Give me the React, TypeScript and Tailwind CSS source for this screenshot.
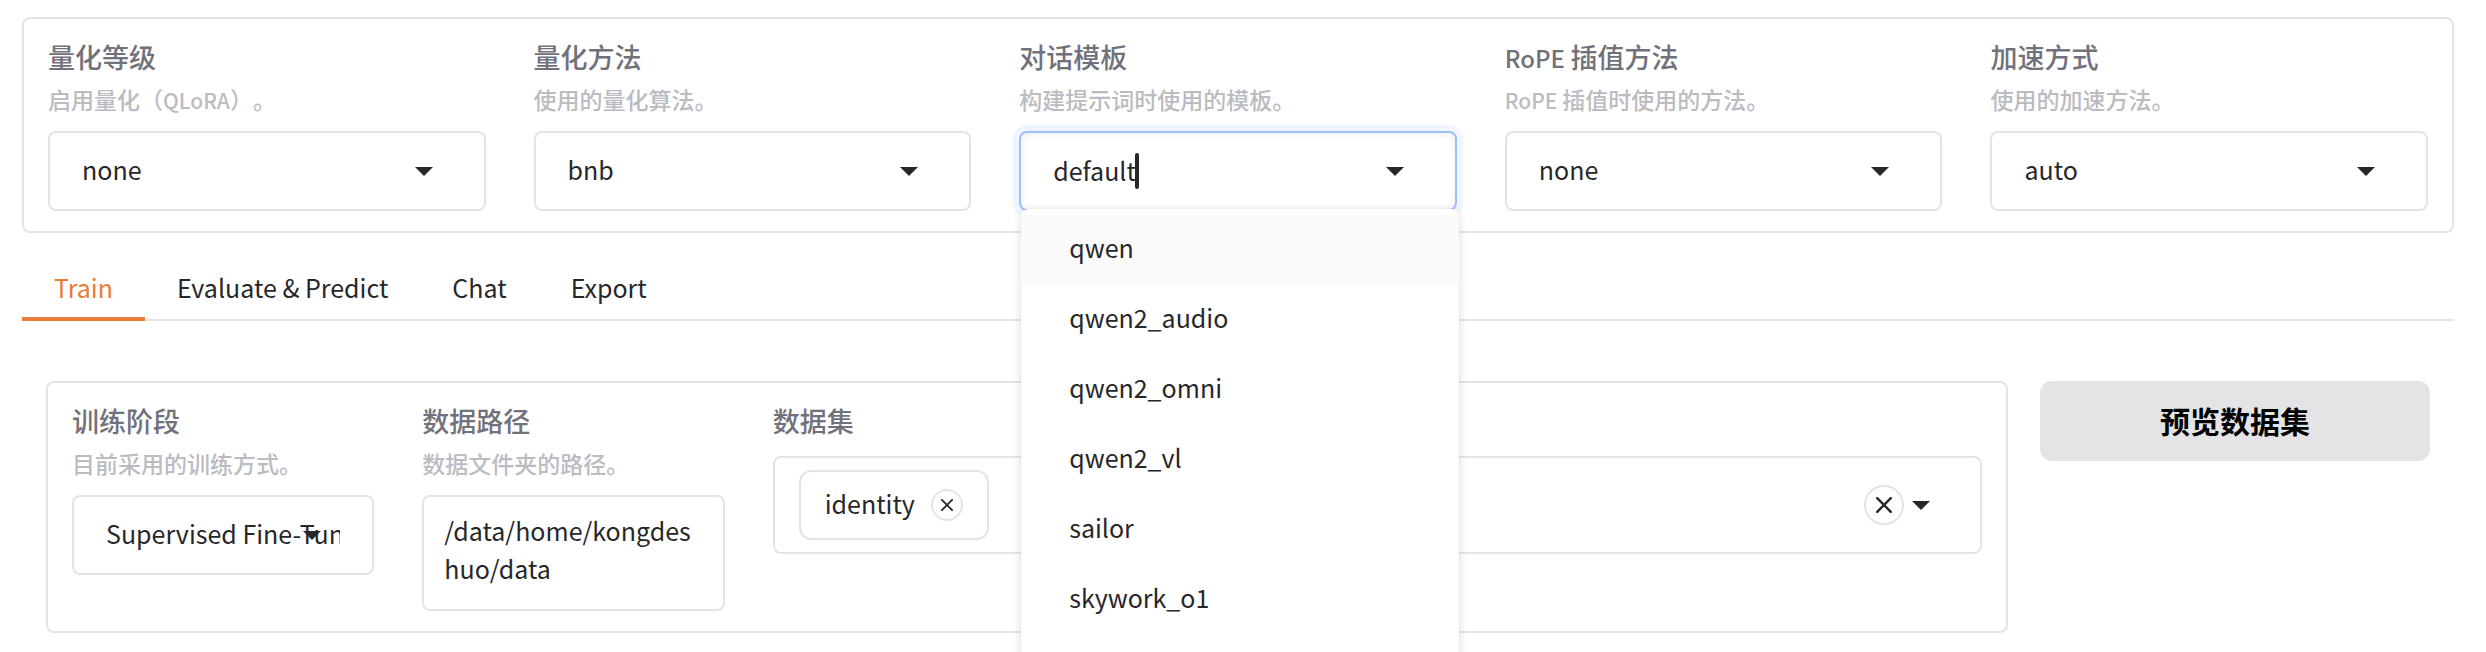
import { useId } from 'react';
import type { ReactNode } from 'react';

function Caret() {
  return (
    <svg viewBox="0 0 18 9" className="h-[9px] w-[18px] fill-zinc-800" aria-hidden="true">
      <path d="M0 0h18L9 9z" />
    </svg>
  );
}

function Cross({ className }: { className: string }) {
  return (
    <svg viewBox="0 0 16 16" className={className} fill="none" stroke="currentColor" strokeLinecap="round" aria-hidden="true">
      <path d="M1.2 1.2 14.8 14.8M14.8 1.2 1.2 14.8" />
    </svg>
  );
}

function Field({ id, label, info, children }: { id: string; label: ReactNode; info?: ReactNode; children: ReactNode }) {
  return (
    <div className="min-w-0">
      <label htmlFor={id} className="block text-[27px] leading-10 font-medium text-zinc-500">
        {label}
      </label>
      {info ? <p className="mt-1 mb-3.5 text-[23px] leading-9 font-medium text-[#bbbbc2]">{info}</p> : <div className="h-[15px]" />}
      {children}
    </div>
  );
}

function SelectField({ label, info, value }: { label: ReactNode; info: ReactNode; value: string }) {
  const id = useId();
  return (
    <Field id={id} label={label} info={info}>
      <div className="relative">
        <select id={id} className="block h-20 w-full appearance-none rounded-lg border-2 border-[#e4e4e5] bg-white px-8 pb-0.5 text-[25px] text-zinc-800">
          <option>{value}</option>
        </select>
        <span className="pointer-events-none absolute inset-y-0 right-[53px] flex items-center">
          <Caret />
        </span>
      </div>
    </Field>
  );
}

const templates = ['qwen', 'qwen2_audio', 'qwen2_omni', 'qwen2_vl', 'sailor', 'skywork_o1'];

function TemplateField() {
  return (
    <Field id="template" label="对话模板" info="构建提示词时使用的模板。">
      <div className="relative">
        <input
          id="template"
          type="text"
          role="combobox"
          aria-expanded="true"
          aria-controls="template-options"
          defaultValue="default"
          className="block h-20 w-full rounded-lg border-2 border-[#9cc0f9] bg-white px-8 pb-0.5 text-[25px] text-zinc-800 shadow-[0_0_0_6px_#eff6ff,inset_0_2px_8px_0_rgba(0,0,0,0.07)] outline-none"
        />
        <span className="pointer-events-none absolute top-[22px] left-[116px] h-9 w-1 rounded-sm bg-zinc-800" />
        <span className="pointer-events-none absolute inset-y-0 right-[53px] flex items-center">
          <Caret />
        </span>
        <ul
          id="template-options"
          role="listbox"
          className="absolute top-[78px] left-0.5 z-10 w-full rounded-t-lg bg-white pt-1.5 pb-16 shadow-[0_2px_10px_0_rgba(0,0,0,0.14)]"
        >
          {templates.map((name, i) => (
            <li
              key={name}
              role="option"
              aria-selected={i === 0}
              className="flex h-[70px] items-center px-12 pb-1 text-[25px] text-zinc-800 aria-selected:bg-[#fafafa]"
            >
              {name}
            </li>
          ))}
        </ul>
      </div>
    </Field>
  );
}

const tabs = ['Train', 'Evaluate & Predict', 'Chat', 'Export'];

export default function App() {
  return (
    <div className="min-h-screen overflow-hidden bg-white pt-[17px] pr-8 pl-[22px] font-['Noto_Sans_CJK_SC',sans-serif] [text-spacing-trim:space-all]">
      <section className="grid grid-cols-5 gap-12 rounded-lg border-2 border-[#e4e4e5] px-6 pt-[18px] pb-5">
        <SelectField label="量化等级" info={<>启用量化（<span className="text-[21px] leading-none">QLoRA</span>）。</>} value="none" />
        <SelectField label="量化方法" info="使用的量化算法。" value="bnb" />
        <TemplateField />
        <SelectField
          label={<><span className="text-2xl leading-none">RoPE </span>插值方法</>}
          info={<><span className="text-[21px] leading-none">RoPE </span>插值时使用的方法。</>}
          value="none"
        />
        <SelectField label="加速方式" info="使用的加速方法。" value="auto" />
      </section>

      <div role="tablist" className="mt-8 flex h-14 shadow-[inset_0_-2px_0_#e4e4e5]">
        {tabs.map((name, i) => (
          <button
            key={name}
            type="button"
            role="tab"
            aria-selected={i === 0}
            className="border-b-4 border-transparent px-8 pb-1.5 text-[25px] text-zinc-800 aria-selected:border-[#e97c38] aria-selected:text-[#e97c38]"
          >
            {name}
          </button>
        ))}
      </div>

      <div className="mt-[60px] grid grid-cols-[1fr_390px] items-start gap-8 px-6">
        <section className="grid grid-cols-[1fr_1fr_4fr] gap-12 rounded-lg border-2 border-[#e4e4e5] px-6 pt-[18px] pb-5">
          <SelectField label="训练阶段" info="目前采用的训练方式。" value="Supervised Fine-Tuning" />
          <Field id="data-dir" label="数据路径" info="数据文件夹的路径。">
            <textarea
              id="data-dir"
              defaultValue="/data/home/kongdeshuo/data"
              className="block h-[116px] w-full resize-none overflow-hidden rounded-lg border-2 border-[#e4e4e5] bg-white px-5 py-3.5 text-[25px] leading-[38px] break-all text-zinc-800"
            />
          </Field>
          <Field id="dataset" label="数据集">
            <div className="flex h-[98px] items-center rounded-lg border-2 border-[#e4e4e5] pr-[50px] pl-6">
              <span className="flex h-[70px] items-center gap-4 rounded-xl border-2 border-[#e4e4e5] px-6 text-[25px] text-zinc-800">
                <span className="pb-0.5">identity</span>
                <button type="button" aria-label="identity" className="flex size-8 items-center justify-center rounded-full border-2 border-[#e4e4e5]">
                  <Cross className="size-3 stroke-[2.4]" />
                </button>
              </span>
              <input id="dataset" type="text" className="h-10 min-w-0 flex-1 bg-transparent px-2 text-[25px] outline-none" />
              <button type="button" aria-label="clear" className="mr-2 flex size-10 items-center justify-center rounded-full border-2 border-[#e4e4e5] text-zinc-800">
                <Cross className="size-4 stroke-[2.4]" />
              </button>
              <Caret />
            </div>
          </Field>
        </section>
        <button type="button" className="h-20 rounded-xl bg-[#e4e4e6] pb-0.5 text-[30px] font-bold text-black">
          预览数据集
        </button>
      </div>
    </div>
  );
}
